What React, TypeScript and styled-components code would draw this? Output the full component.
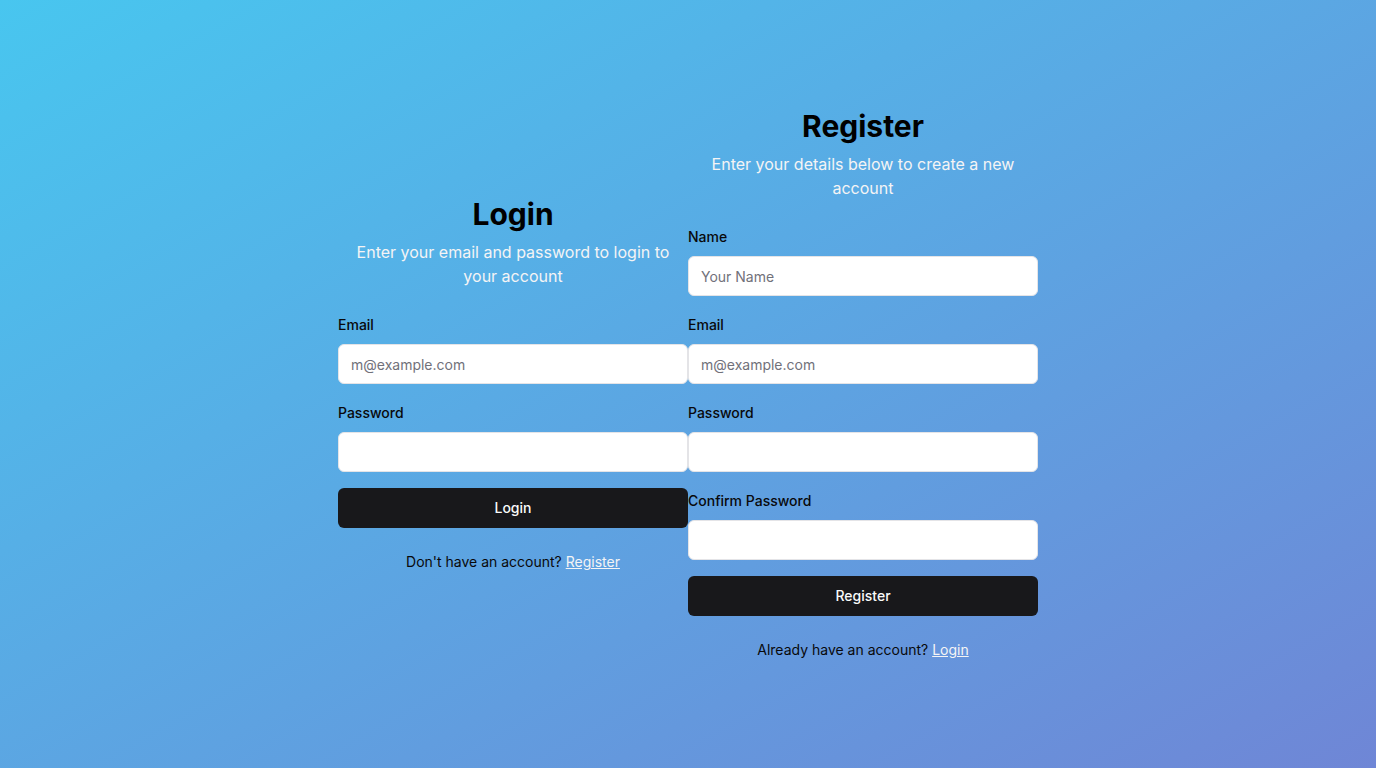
import React, { useId } from "react";
import styled, { createGlobalStyle } from "styled-components";

const GlobalStyle = createGlobalStyle`
  *, *::before, *::after { box-sizing: border-box; }
  body {
    margin: 0;
    color: #09090b;
    font-family: Inter, "Liberation Sans", sans-serif;
    font-size: 16px;
    font-optical-sizing: none;
    line-height: 24px;
  }
  h1, p { margin: 0; }
`;

const Page = styled.main`
  display: flex;
  align-items: center;
  justify-content: center;
  min-height: 100vh;
  background: linear-gradient(to bottom right, #48c6ef, #6f86d6);
`;

const Form = styled.form`
  display: grid;
  gap: 24px;
  width: 350px;
`;

const Header = styled.header`
  display: grid;
  gap: 8px;
  text-align: center;
`;

const Title = styled.h1`
  color: #000;
  font-size: 30px;
  font-weight: 700;
  line-height: 36px;
`;

const Lead = styled.p`
  color: #f4f4f5;
`;

const Fields = styled.div`
  display: grid;
  gap: 16px;
`;

const FieldGroup = styled.div`
  line-height: 24px;
`;

const Label = styled.label`
  font-size: 14px;
  font-weight: 500;
  line-height: 14px;
`;

const Input = styled.input`
  display: block;
  width: 100%;
  height: 40px;
  margin: 8px 0 0;
  padding: 8px 12px;
  border: 1px solid #e4e4e7;
  border-radius: 6px;
  background: #fff;
  font: inherit;
  font-size: 14px;
  line-height: 20px;
  &::placeholder { color: #71717a; }
`;

const SubmitButton = styled.button`
  height: 40px;
  border: 0;
  border-radius: 6px;
  background: #18181b;
  color: #fafafa;
  font: inherit;
  font-size: 14px;
  font-weight: 500;
  cursor: pointer;
`;

const Footer = styled.p`
  font-size: 14px;
  line-height: 20px;
  text-align: center;
`;

const TextLink = styled.a`
  color: #f4f4f5;
  text-decoration: underline;
`;

type FieldProps = { label: string; type: string; placeholder?: string };

function Field({ label, type, placeholder }: FieldProps) {
  const id = useId();
  return (
    <FieldGroup>
      <Label htmlFor={id}>{label}</Label>
      <Input id={id} type={type} placeholder={placeholder} />
    </FieldGroup>
  );
}

type AuthFormProps = {
  id: string;
  title: string;
  lead: string;
  fields: FieldProps[];
  prompt: string;
  linkText: string;
  href: string;
};

function AuthForm({ id, title, lead, fields, prompt, linkText, href }: AuthFormProps) {
  return (
    <Form id={id} onSubmit={(event) => event.preventDefault()}>
      <Header>
        <Title>{title}</Title>
        <Lead>{lead}</Lead>
      </Header>
      <Fields>
        {fields.map((field) => (
          <Field key={field.label} {...field} />
        ))}
        <SubmitButton type="submit">{title}</SubmitButton>
      </Fields>
      <Footer>
        {prompt} <TextLink href={href}>{linkText}</TextLink>
      </Footer>
    </Form>
  );
}

const email: FieldProps = { label: "Email", type: "email", placeholder: "m@example.com" };
const password: FieldProps = { label: "Password", type: "password" };

export default function App() {
  return (
    <>
      <GlobalStyle />
      <Page>
        <AuthForm
          id="login"
          title="Login"
          lead="Enter your email and password to login to your account"
          fields={[email, password]}
          prompt="Don't have an account?"
          linkText="Register"
          href="#register"
        />
        <AuthForm
          id="register"
          title="Register"
          lead="Enter your details below to create a new account"
          fields={[
            { label: "Name", type: "text", placeholder: "Your Name" },
            email,
            password,
            { label: "Confirm Password", type: "password" },
          ]}
          prompt="Already have an account?"
          linkText="Login"
          href="#login"
        />
      </Page>
    </>
  );
}
